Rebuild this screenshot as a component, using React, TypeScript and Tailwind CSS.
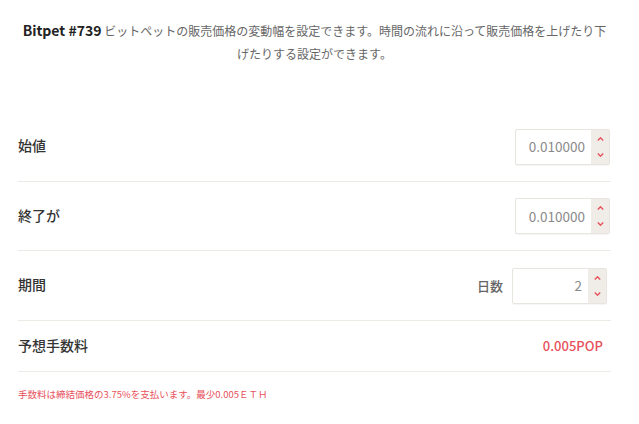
import React from "react";

const font = { fontFamily: '"Noto Sans CJK JP", "Noto Sans", sans-serif' };

function Spinner() {
  return (
    <div className="flex w-[18px] flex-col items-center justify-center gap-[12px] bg-[#f0ede9]">
      <svg width="7" height="4" viewBox="0 0 7 4" fill="none">
        <path d="M0.8 3.5L3.5 0.8L6.2 3.5" stroke="#e8505b" strokeWidth="1.4" />
      </svg>
      <svg width="7" height="4" viewBox="0 0 7 4" fill="none">
        <path d="M0.8 0.5L3.5 3.2L6.2 0.5" stroke="#e8505b" strokeWidth="1.4" />
      </svg>
    </div>
  );
}

function NumberBox({ value }: { value: string }) {
  return (
    <div className="flex h-[36px] w-[95px] overflow-hidden rounded-[2px] border border-[#e8e4df] bg-white shadow-[0_1px_1px_rgba(0,0,0,0.04)]">
      <div className="flex flex-1 items-center justify-end pr-[6px] text-[13.5px] text-[#8a8a8a]">
        {value}
      </div>
      <Spinner />
    </div>
  );
}

function Row({ label, children, h = "h-[70px]" }: { label: string; children: React.ReactNode; h?: string }) {
  return (
    <div className={`flex ${h} items-center justify-between border-b border-[#eeebe7]`}>
      <div className="mb-[2px] text-[14px] font-medium text-[#333]">{label}</div>
      {children}
    </div>
  );
}

export default function App() {
  return (
    <div className="h-[424px] w-[639px] bg-white pl-[18px] pr-[28px]" style={font}>
      <div className="px-[4px] pt-[19px] text-center text-[12px] leading-[23px] text-[#666]">
        <span className="text-[14px] font-bold text-[#222]">Bitpet #739</span> ビットペットの販売価格の変動幅を設定できます。時間の流れに沿って販売価格を上げたり下げたりする設定ができます。
      </div>
      <div className="mt-[47px]">
        <Row label="始値">
          <div className="mr-[1px]">
            <NumberBox value="0.010000" />
          </div>
        </Row>
        <Row label="終了が" h="h-[69px]">
          <div className="mr-[1px]">
            <NumberBox value="0.010000" />
          </div>
        </Row>
        <Row label="期間">
          <div className="mr-[4px] flex items-center gap-[9px]">
            <span className="text-[13px] font-medium text-[#666]">日数</span>
            <NumberBox value="2" />
          </div>
        </Row>
        <Row label="予想手数料" h="h-[51px]">
          <span className="mr-[8px] text-[13px] font-medium text-[#e8505b]">0.005POP</span>
        </Row>
      </div>
      <div className="mt-[15px] text-[9.5px] text-[#e8505b]">
        手数料は締結価格の3.75%を支払います。最少0.005ＥＴＨ
      </div>
    </div>
  );
}
